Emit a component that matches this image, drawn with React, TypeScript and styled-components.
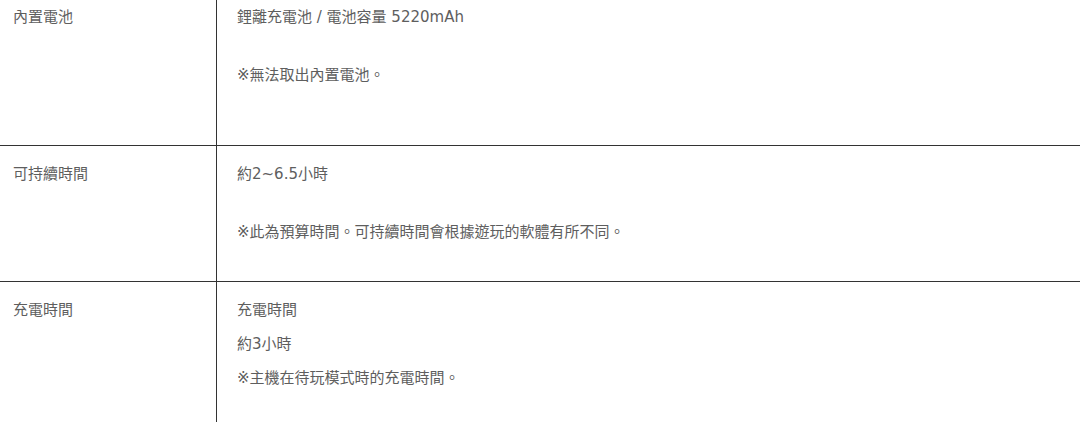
import React from 'react';
import styled, { createGlobalStyle } from 'styled-components';

const GlobalStyle = createGlobalStyle`
  html, body {
    margin: 0;
    padding: 0;
    background: #ffffff;
  }

  body {
    font-family: 'DejaVu Sans', 'Noto Sans CJK TC', sans-serif;
    font-size: 15px;
    color: #5e5e5e;
    overflow: hidden;
  }
`;

const SpecTable = styled.div`
  display: flex;
  flex-direction: column;
  width: 1080px;
  /* the capture starts a little below the top of the first row */
  margin-top: -11px;
`;

const Row = styled.div<{ $minHeight: number }>`
  display: grid;
  grid-template-columns: 217px 1fr;
  min-height: ${({ $minHeight }) => $minHeight}px;
  border-bottom: 1px solid #333333;
`;

const Label = styled.div`
  padding: 17px 13px;
  border-right: 1px solid #333333;
  line-height: 22px;
`;

const Value = styled.div<{ $gap: number }>`
  display: flex;
  flex-direction: column;
  gap: ${({ $gap }) => $gap}px;
  padding: 17px 20px;
`;

const Line = styled.p`
  margin: 0;
  line-height: 22px;
`;

interface Spec {
  label: string;
  lines: string[];
  gap: number;
  minHeight: number;
}

const SPECS: Spec[] = [
  {
    label: '內置電池',
    lines: ['鋰離充電池 / 電池容量 5220mAh', '※無法取出內置電池。'],
    gap: 36,
    minHeight: 156,
  },
  {
    label: '可持續時間',
    lines: ['約2~6.5小時', '※此為預算時間。可持續時間會根據遊玩的軟體有所不同。'],
    gap: 36,
    minHeight: 135,
  },
  {
    label: '充電時間',
    lines: ['充電時間', '約3小時', '※主機在待玩模式時的充電時間。'],
    gap: 12,
    minHeight: 160,
  },
];

const App: React.FC = () => (
  <>
    <GlobalStyle />
    <SpecTable>
      {SPECS.map((spec) => (
        <Row key={spec.label} $minHeight={spec.minHeight}>
          <Label>{spec.label}</Label>
          <Value $gap={spec.gap}>
            {spec.lines.map((line) => (
              <Line key={line}>{line}</Line>
            ))}
          </Value>
        </Row>
      ))}
    </SpecTable>
  </>
);

export default App;
